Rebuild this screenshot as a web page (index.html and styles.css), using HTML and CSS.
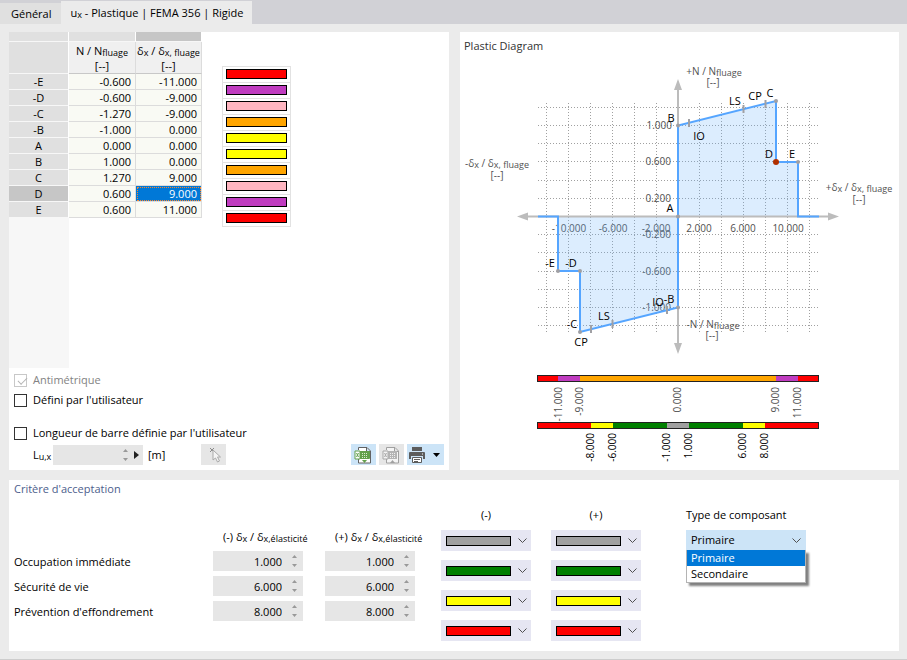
FILE: index.html
```html
<!DOCTYPE html>
<html lang="fr">
<head>
<meta charset="utf-8">
<title>Articulation plastique</title>
<link rel="stylesheet" href="styles.css">
</head>
<body>
<div class="window">
<nav class="tabs">
  <button class="tab" type="button">Général</button>
  <button class="tab tab-active" type="button">u<span class="sub">x</span> - Plastique | FEMA 356 | Rigide</button>
</nav>
<main class="content">
  <section class="panel panel-data">
    <div class="data-area">
      <div class="table-strip">
        <table class="grid">
          <colgroup><col class="col-head"><col class="col-val"><col class="col-last"></colgroup>
          <thead>
            <tr class="selector-row"><th></th><th></th><th class="current"></th></tr>
            <tr class="title-row"><th></th><th>N / N<span class="sub">fluage</span><br>[--]</th><th>δ<span class="sub">x</span> / δ<span class="sub">x, fluage</span><br>[--]</th></tr>
          </thead>
          <tbody>
            <tr><th>-E</th><td>-0.600</td><td>-11.000</td></tr>
            <tr><th>-D</th><td>-0.600</td><td>-9.000</td></tr>
            <tr><th>-C</th><td>-1.270</td><td>-9.000</td></tr>
            <tr><th>-B</th><td>-1.000</td><td>0.000</td></tr>
            <tr><th>A</th><td>0.000</td><td>0.000</td></tr>
            <tr><th>B</th><td>1.000</td><td>0.000</td></tr>
            <tr><th>C</th><td>1.270</td><td>9.000</td></tr>
            <tr><th class="current">D</th><td>0.600</td><td class="selected">9.000</td></tr>
            <tr><th>E</th><td>0.600</td><td>11.000</td></tr>
          </tbody>
        </table>
      </div>
      <ul class="colors">
        <li><span class="swatch red"></span></li>
        <li><span class="swatch purple"></span></li>
        <li><span class="swatch pink"></span></li>
        <li><span class="swatch orange"></span></li>
        <li><span class="swatch yellow"></span></li>
        <li><span class="swatch yellow"></span></li>
        <li><span class="swatch orange"></span></li>
        <li><span class="swatch pink"></span></li>
        <li><span class="swatch purple"></span></li>
        <li><span class="swatch red"></span></li>
      </ul>
    </div>
    <div class="options">
      <label class="check disabled"><input type="checkbox" checked disabled>Antimétrique</label>
      <label class="check"><input type="checkbox">Défini par l'utilisateur</label>
      <label class="check check-spaced"><input type="checkbox">Longueur de barre définie par l'utilisateur</label>
    </div>
    <div class="length-row">
      <label class="length-label" for="length">L<span class="sub">u,x</span></label>
      <span class="spin spin-length">
        <input id="length" type="text" disabled>
        <svg class="arrows" viewBox="0 0 7 14"><path d="M3.500 1L6 4H1zM3.500 13L6 10H1z"/></svg>
        <svg class="play" viewBox="0 0 5 8"><path d="M0 0L5 4L0 8z"/></svg>
      </span>
      <span class="unit">[m]</span>
      <button class="tool tool-off pick" type="button" aria-label="Sélectionner" disabled>
        <svg viewBox="0 0 25 20"><path d="M9 3l4 4M13 3l-4 4" stroke="#8a8a8a" fill="none"/><path d="M12 5v10l2.500-2 2 4 2-1-2-4h3z" fill="#f4f4f4" stroke="#aaa"/></svg>
      </button>
      <div class="tools">
        <button class="tool" type="button" aria-label="Exporter">
          <svg viewBox="0 0 25 20"><path d="M7.500 5V2.500H16L19.500 6v12h-12v-4M15.500 2.500V6.500H19.500" fill="#fff" stroke="#626262"/><path d="M4.500 6v7M9.500 6v7M4.500 13.500h14v-7h-9M5 6.500h2.500M5 13.500h2" stroke="#62a04c" fill="none"/><path d="M4 6h5v8H4z" fill="#fff" stroke="#62a04c"/><path d="M9 6h9v7H9z" fill="#62a04c"/><path d="M11 8.500h5M11 10.500h5M11 12.500h5" stroke="#d8ebd0" stroke-dasharray="1 1"/><path d="M5.500 8l2 4M7.500 8l-2 4" stroke="#62a04c"/><path d="M11 15h5l-2.500 3z" fill="#62a04c"/></svg>
        </button>
        <button class="tool tool-off" type="button" aria-label="Importer" disabled>
          <svg viewBox="0 0 25 20"><path d="M7.500 5V2.500H16L19.500 6v12h-12v-4M15.500 2.500V6.500H19.500" fill="#f4f4f4" stroke="#a0a0a0"/><path d="M4 6h5v8H4z" fill="#f4f4f4" stroke="#a8a8a8"/><path d="M9 6h9v8H9z" fill="#b4b4b4"/><path d="M11 8.500h5M11 10.500h5M11 12.500h5" stroke="#eee" stroke-dasharray="1 1"/><path d="M5.500 8l2 4M7.500 8l-2 4" stroke="#a8a8a8"/><path d="M11 18h5l-2.500-3z" fill="#a0a0a0"/></svg>
        </button>
        <button class="tool tool-wide" type="button" aria-label="Imprimer">
          <svg viewBox="0 0 37 20"><path d="M5 2h10v4H5z" fill="#5c5c5c"/><path d="M3 7h14q1 0 1 1v6h-2v-3H4v3H2V8q0-1 1-1z" fill="#5c5c5c"/><path d="M15 9h1" stroke="#fff"/><path d="M5.500 12.500h9v5h-9z" fill="#fff" stroke="#5c5c5c"/><path d="M7 14.500h6M7 16.500h4" stroke="#5c5c5c"/><path d="M26 8h7l-3.500 4z" fill="#000"/></svg>
        </button>
      </div>
    </div>
  </section>

  <section class="panel panel-diagram">
    <h2 class="panel-title dark">Plastic Diagram</h2>
    <svg class="diagram" viewBox="460 55 439 408">
      <path class="gridline" d="M538 107.500H819M538 125.500H819M538 143.500H819M538 161.500H819M538 180.500H819M538 198.500H819M538 234.500H819M538 252.500H819M538 271.500H819M538 289.500H819M538 307.500H819M538 325.500H819"/>
      <path class="gridline" d="M546.500 103V332M568.500 103V332M590.500 103V332M612.500 103V332M634.500 103V332M656.500 103V332M699.500 103V332M721.500 103V332M743.500 103V332M765.500 103V332M787.500 103V332M809.500 103V332"/>
      <g class="ticks">
        <text x="672" y="129" text-anchor="end">1.000</text>
        <text x="671" y="165" text-anchor="end">0.600</text>
        <text x="671" y="202" text-anchor="end">0.200</text>
        <text x="671" y="238" text-anchor="end">-0.200</text>
        <text x="671" y="275" text-anchor="end">-0.600</text>
        <text x="671" y="311" text-anchor="end">-1.000</text>
        <text x="569" y="232" text-anchor="middle">-10.000</text>
        <text x="613" y="232" text-anchor="middle">-6.000</text>
        <text x="656" y="232" text-anchor="middle">-2.000</text>
        <text x="699" y="232" text-anchor="middle">2.000</text>
        <text x="743" y="232" text-anchor="middle">6.000</text>
        <text x="788" y="232" text-anchor="middle">10.000</text>
        <text x="714" y="75" text-anchor="middle">+N / N<tspan class="low" dy="1">fluage</tspan></text>
        <text x="713" y="86" text-anchor="middle">[--]</text>
        <text x="713" y="328" text-anchor="middle">-N / N<tspan class="low" dy="1">fluage</tspan></text>
        <text x="712" y="339" text-anchor="middle">[--]</text>
        <text x="497" y="167" text-anchor="middle">-δ<tspan class="low" dy="1">x</tspan><tspan dy="-1"> / δ</tspan><tspan class="low" dy="1">x, fluage</tspan></text>
        <text x="497" y="179" text-anchor="middle">[--]</text>
        <text x="859" y="191" text-anchor="middle">+δ<tspan class="low" dy="1">x</tspan><tspan dy="-1"> / δ</tspan><tspan class="low" dy="1">x, fluage</tspan></text>
        <text x="859" y="203" text-anchor="middle">[--]</text>
      </g>
      <path class="area" d="M558 216.500V271H580V332L678 307.500V216.500zM678 216.500V125.500L776 101V162H798V216.500z"/>
      <path class="axis" d="M527 216.500H829M678 89V344"/>
      <path class="axis-head" d="M517 216.500l11-4v8zM839 216.500l-11-4v8zM678 79l-4 11h8zM678 354l-4-11h8z"/>
      <path class="curve" d="M538 216.500H558V271H580V332L678 307.500V125.500L776 101V162H798V216.500H819"/>
      <path class="mark" d="M689 119v8M743.500 105v8M765.500 100v8M667 306v8M612.500 320v8M591 325v8"/>
      <g class="node">
        <circle cx="678" cy="125.500" r="2"/><circle cx="678" cy="216.500" r="2"/><circle cx="678" cy="307.500" r="2"/>
        <circle cx="776" cy="101" r="2"/><circle cx="798" cy="162" r="2"/>
        <circle cx="558" cy="271" r="2"/><circle cx="580" cy="271" r="2"/><circle cx="580" cy="332" r="2"/>
      </g>
      <circle cx="776" cy="162" r="3" fill="#b03000"/>
      <g class="names" text-anchor="middle">
        <text x="671" y="122">B</text><text x="699" y="140">IO</text><text x="735" y="105">LS</text>
        <text x="755" y="100">CP</text><text x="770" y="97">C</text><text x="769" y="158">D</text>
        <text x="792" y="158">E</text><text x="670" y="212">A</text><text x="550" y="267">-E</text>
        <text x="571" y="267">-D</text><text x="572" y="328">-C</text><text x="581" y="346">CP</text>
        <text x="604" y="320">LS</text><text x="658" y="306">IO</text><text x="669" y="303">-B</text>
      </g>
      <g class="bar">
        <path d="M538 379H558" stroke="#f00"/><path d="M558 379H580" stroke="#c03cc0"/><path d="M580 379H776" stroke="#ffa500"/>
        <path d="M776 379H798" stroke="#c03cc0"/><path d="M798 379H819" stroke="#f00"/>
        <path d="M538 425.500H591" stroke="#f00"/><path d="M591 425.500H613" stroke="#ff0"/><path d="M613 425.500H667" stroke="#008000"/>
        <path d="M667 425.500H689" stroke="#a0a0a0"/><path d="M689 425.500H743" stroke="#008000"/><path d="M743 425.500H765" stroke="#ff0"/>
        <path d="M765 425.500H819" stroke="#f00"/>
      </g>
      <rect class="bar-frame" x="537.500" y="375.500" width="281" height="6"/>
      <rect class="bar-frame" x="537.500" y="422.500" width="281" height="6"/>
      <g class="ticks" text-anchor="end">
        <text transform="translate(562 387) rotate(-90)">-11.000</text><text transform="translate(583 387) rotate(-90)">-9.000</text>
        <text transform="translate(681 387) rotate(-90)">0.000</text><text transform="translate(779 387) rotate(-90)">9.000</text>
        <text transform="translate(801 387) rotate(-90)">11.000</text>
      </g>
      <g class="limits" text-anchor="end">
        <text transform="translate(594 433) rotate(-90)">-8.000</text><text transform="translate(616 433) rotate(-90)">-6.000</text>
        <text transform="translate(670 433) rotate(-90)">-1.000</text><text transform="translate(692 433) rotate(-90)">1.000</text>
        <text transform="translate(746 433) rotate(-90)">6.000</text><text transform="translate(768 433) rotate(-90)">8.000</text>
      </g>
    </svg>
  </section>

  <section class="panel panel-criteria">
    <h2 class="panel-title">Critère d'acceptation</h2>
    <div class="criteria">
      <div class="limits-grid">
        <span></span>
        <span class="limit-head">(-) δ<span class="sub">x</span> / δ<span class="sub">x,élasticité</span></span>
        <span class="limit-head">(+) δ<span class="sub">x</span> / δ<span class="sub">x,élasticité</span></span>
        <label for="io">Occupation immédiate</label>
        <span class="spin"><input id="io" type="text" value="1.000" readonly><svg class="arrows" viewBox="0 0 7 14"><path d="M3.500 1L6 4H1zM3.500 13L6 10H1z"/></svg></span>
        <span class="spin"><input aria-label="Occupation immédiate (+)" type="text" value="1.000" readonly><svg class="arrows" viewBox="0 0 7 14"><path d="M3.500 1L6 4H1zM3.500 13L6 10H1z"/></svg></span>
        <label for="ls">Sécurité de vie</label>
        <span class="spin"><input id="ls" type="text" value="6.000" readonly><svg class="arrows" viewBox="0 0 7 14"><path d="M3.500 1L6 4H1zM3.500 13L6 10H1z"/></svg></span>
        <span class="spin"><input aria-label="Sécurité de vie (+)" type="text" value="6.000" readonly><svg class="arrows" viewBox="0 0 7 14"><path d="M3.500 1L6 4H1zM3.500 13L6 10H1z"/></svg></span>
        <label for="cp">Prévention d'effondrement</label>
        <span class="spin"><input id="cp" type="text" value="8.000" readonly><svg class="arrows" viewBox="0 0 7 14"><path d="M3.500 1L6 4H1zM3.500 13L6 10H1z"/></svg></span>
        <span class="spin"><input aria-label="Prévention d'effondrement (+)" type="text" value="8.000" readonly><svg class="arrows" viewBox="0 0 7 14"><path d="M3.500 1L6 4H1zM3.500 13L6 10H1z"/></svg></span>
      </div>
      <div class="color-column">
        <span class="column-head">(-)</span>
        <span class="picker"><select aria-label="Couleur 1 (-)"><option></option></select><span class="swatch gray"></span><svg class="chevron" viewBox="0 0 9 5"><path d="M.5 .5l4 4 4-4"/></svg></span>
        <span class="picker"><select aria-label="Couleur 2 (-)"><option></option></select><span class="swatch green"></span><svg class="chevron" viewBox="0 0 9 5"><path d="M.5 .5l4 4 4-4"/></svg></span>
        <span class="picker"><select aria-label="Couleur 3 (-)"><option></option></select><span class="swatch yellow"></span><svg class="chevron" viewBox="0 0 9 5"><path d="M.5 .5l4 4 4-4"/></svg></span>
        <span class="picker"><select aria-label="Couleur 4 (-)"><option></option></select><span class="swatch red"></span><svg class="chevron" viewBox="0 0 9 5"><path d="M.5 .5l4 4 4-4"/></svg></span>
      </div>
      <div class="color-column">
        <span class="column-head">(+)</span>
        <span class="picker"><select aria-label="Couleur 1 (+)"><option></option></select><span class="swatch gray"></span><svg class="chevron" viewBox="0 0 9 5"><path d="M.5 .5l4 4 4-4"/></svg></span>
        <span class="picker"><select aria-label="Couleur 2 (+)"><option></option></select><span class="swatch green"></span><svg class="chevron" viewBox="0 0 9 5"><path d="M.5 .5l4 4 4-4"/></svg></span>
        <span class="picker"><select aria-label="Couleur 3 (+)"><option></option></select><span class="swatch yellow"></span><svg class="chevron" viewBox="0 0 9 5"><path d="M.5 .5l4 4 4-4"/></svg></span>
        <span class="picker"><select aria-label="Couleur 4 (+)"><option></option></select><span class="swatch red"></span><svg class="chevron" viewBox="0 0 9 5"><path d="M.5 .5l4 4 4-4"/></svg></span>
      </div>
      <div class="type-column">
        <label for="type">Type de composant</label>
        <div class="combo">
          <select id="type"><option>Primaire</option><option>Secondaire</option></select>
          <svg class="chevron" viewBox="0 0 9 5"><path d="M.5 .5l4 4 4-4"/></svg>
          <ul class="menu"><li class="menu-current">Primaire</li><li>Secondaire</li></ul>
        </div>
      </div>
    </div>
  </section>
</main>
</div>
</body>
</html>
```

FILE: styles.css
```css
* { box-sizing: border-box; }
body {
  margin: 0;
  background: #ebebeb;
  color: #000;
  font: 11px/16px "Open Sans", "Noto Sans", sans-serif;
}
.window { border-bottom: 1px solid #cdcdcd; }
button, input, select { font: inherit; color: inherit; border: 0; padding: 0; margin: 0; border-radius: 0; }
ul { list-style: none; margin: 0; padding: 0; }
svg { display: block; }
.sub { font-size: 9px; line-height: 1; position: relative; top: 1px; }

.tabs { display: flex; align-items: flex-end; height: 24px; background: #d1d1d6; }
.tab { height: 21px; padding: 0 10px 0 11px; background: #e0e0e0; white-space: nowrap; }
.tab-active { height: 23px; padding: 0 9px; background: #ebebeb; }

.content {
  display: grid;
  grid-template-columns: 440fr 439fr;
  gap: 10px 11px;
  padding: 8px 8px 8px 9px;
}
.panel { background: #fff; min-width: 0; }
.panel-title { margin: 0; padding: 0 5px; font-size: 11px; font-weight: 500; line-height: 18px; color: #4c5e8c; }
.panel-title.dark { color: #333; padding: 5px 4px 0; }

.data-area { display: flex; align-items: flex-start; }
.table-strip { min-height: 336px; background: linear-gradient(#f7f7f7, #f7f7f7) 0 0 / 60px 100% no-repeat; }
.grid { border-collapse: separate; border-spacing: 0; table-layout: fixed; width: 193px; }
.col-head { width: 60px; }
.col-val { width: 67px; }
.col-last { width: 66px; }
.grid th { background: #e0e0e0; font-weight: 400; padding: 0; border-right: 1px solid #fff; border-bottom: 1px solid #f7f7f7; line-height: 15px; height: 16px; }
.grid td { background: #f9faf4; padding: 0 4px 0 0; text-align: right; height: 16px; line-height: 15px; border-right: 1px solid #dcdcdc; border-bottom: 1px solid #dcdcdc; }
.grid .selector-row th { height: 10px; line-height: 0; }
.grid .title-row th { height: 32px; line-height: 15px; white-space: nowrap; }
.grid .title-row th + th { background: #f0f0f0; border-right-color: #dcdcdc; border-bottom-color: #c8c8c8; }
.grid .current { background: #c6c6c6; }
.grid .selected { background: #0078d7; color: #fff; outline: 1px dotted #ff8728; outline-offset: -2px; }
.grid { width: 193px; }

.colors { margin: 34px 0 0 20px; border: 1px solid #e2e2e2; }
.colors li { height: 16px; width: 67px; padding: 2px 3px 3px; border-bottom: 1px solid #e2e2e2; }
.colors li:last-child { border-bottom: 0; height: 15px; }
.swatch { display: block; width: 61px; height: 10px; border: 1px solid #000; }
.red { background: #f00; }
.purple { background: #c03cc0; }
.pink { background: #ffb6c1; }
.orange { background: #ffa500; }
.yellow { background: #ff0; }
.green { background: #008000; }
.gray { background: #a0a0a0; }

.options { padding: 2px 5px 0; }
.check { display: flex; align-items: center; gap: 6px; height: 20px; }
.check-spaced { margin-top: 13px; }
.check input { appearance: none; position: relative; width: 13px; height: 13px; background: #fff; border: 1px solid #333; }
.check.disabled { color: #838383; }
.check.disabled input { border-color: #c8c8c8; }
.check input:checked::before {
  content: "";
  position: absolute;
  left: 3px;
  top: 1px;
  width: 8px;
  height: 4px;
  border: solid #b4b4b4;
  border-width: 0 0 1px 1px;
  transform: rotate(-45deg) translate(-1px, 1px);
}
.length-row { display: flex; align-items: center; height: 21px; margin: 1px 5px 5px 24px; }
.length-label { width: 20px; white-space: nowrap; }
.spin { display: flex; align-items: center; background: #e6e6e6; height: 20px; width: 90px; }
.spin input { flex: 1; min-width: 0; background: transparent; text-align: right; height: 20px; outline: 0; }
.arrows { width: 7px; height: 14px; margin: 0 5px 0 9px; fill: #999; }
.play { width: 5px; height: 8px; margin-right: 4px; fill: #222; }
.unit { margin-left: 5px; width: 53px; }
.tool { width: 25px; height: 21px; background: #cce4f7; }
.tool svg { width: 100%; height: 20px; }
.tool-off { background: #e6e6e6; }
.tool-wide { width: 37px; }
.tools { display: flex; gap: 3px; margin-left: auto; }

.diagram { width: 100%; height: auto; font-size: 11px; }
.gridline { fill: none; stroke: #a0a0a0; stroke-dasharray: 1 2; }
.ticks { font-size: 10px; fill: #505050; }
.low { font-size: 9px; }
.limits { font-size: 10px; }
.area { fill: #66b0fa; fill-opacity: .23; }
.axis { fill: none; stroke: #bcbcbc; stroke-width: 2; }
.axis-head { fill: #bcbcbc; }
.curve { fill: none; stroke: #55a5ff; stroke-width: 2; }
.mark { stroke: #a0a0a4; stroke-width: 2; }
.node { fill: #a0a0a4; }
.bar { stroke-width: 6; }
.bar-frame { fill: none; stroke: #222; }

.panel-criteria { grid-column: 1 / -1; }
.criteria { display: flex; align-items: flex-start; padding: 9px 5px 10px; }
.limits-grid { display: grid; grid-template-columns: 199px 90px 90px; grid-template-rows: 17px; row-gap: 5px; margin-top: 22px; align-items: center; }
.limits-grid > :nth-child(3n) { margin-left: 22px; width: 90px; }
.limits-grid label { padding-top: 2px; }
.limits-grid .limit-head { padding-left: 10px; white-space: nowrap; align-self: start; }
.color-column { display: flex; flex-direction: column; gap: 9px; width: 90px; margin-left: 48px; }
.color-column + .color-column { margin-left: 20px; }
.column-head { text-align: center; height: 14px; line-height: 16px; }
.picker { position: relative; display: flex; align-items: center; gap: 7px; padding-left: 5px; height: 21px; background: #e6e6f2; }
.picker select { position: absolute; inset: 0; width: 100%; height: 100%; appearance: none; background: transparent; }
.picker .swatch { width: 65px; }
.chevron { width: 9px; height: 5px; fill: none; stroke: #505050; overflow: visible; }
.type-column { margin-left: 45px; width: 120px; }
.type-column label { display: block; height: 23px; line-height: 16px; white-space: nowrap; }
.combo { position: relative; display: flex; align-items: center; background: #cce4f7; height: 20px; padding-right: 5px; }
.combo select { appearance: none; flex: 1; height: 20px; background: transparent; padding-left: 5px; }
.menu { position: absolute; top: 20px; left: 0; right: 0; background: #fff; border: 1px solid #b4b4b4; border-top: 0; box-shadow: 3px 3px 2px #808080; }
.menu li { height: 16px; padding-left: 4px; }
.menu .menu-current { background: #0078d7; color: #fff; }
```
